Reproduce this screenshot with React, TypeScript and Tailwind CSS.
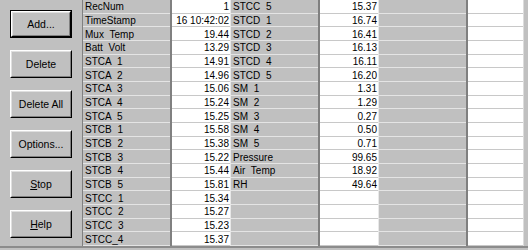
import type { ReactNode } from 'react'

type Cell = [string, string]

const ROWS = 18

const GROUPS: Cell[][] = [
  [
    ['RecNum', '1'],
    ['TimeStamp', '16 10:42:02'],
    ['Mux Temp', '19.44'],
    ['Batt Volt', '13.29'],
    ['STCA 1', '14.91'],
    ['STCA 2', '14.96'],
    ['STCA 3', '15.06'],
    ['STCA 4', '15.24'],
    ['STCA 5', '15.25'],
    ['STCB 1', '15.58'],
    ['STCB 2', '15.38'],
    ['STCB 3', '15.22'],
    ['STCB 4', '15.44'],
    ['STCB 5', '15.81'],
    ['STCC 1', '15.34'],
    ['STCC 2', '15.27'],
    ['STCC 3', '15.23'],
    ['STCC_4', '15.37'],
  ],
  [
    ['STCC 5', '15.37'],
    ['STCD 1', '16.74'],
    ['STCD 2', '16.41'],
    ['STCD 3', '16.13'],
    ['STCD 4', '16.11'],
    ['STCD 5', '16.20'],
    ['SM 1', '1.31'],
    ['SM 2', '1.29'],
    ['SM 3', '0.27'],
    ['SM 4', '0.50'],
    ['SM 5', '0.71'],
    ['Pressure', '99.65'],
    ['Air Temp', '18.92'],
    ['RH', '49.64'],
  ],
  [],
]

function pad(cells: Cell[]): Cell[] {
  const out = [...cells]
  while (out.length < ROWS) out.push(['', ''])
  return out
}

function WinButton({ children, isDefault }: { children: ReactNode; isDefault?: boolean }) {
  return (
    <div className={`flex h-[28px] w-[62px] ${isDefault ? 'border border-black' : ''}`}>
      <div className="flex flex-1 border border-t-white border-l-white border-r-black border-b-black">
        <div className="flex flex-1 items-center justify-center border border-t-[#dfdfdf] border-l-[#dfdfdf] border-r-[#808080] border-b-[#808080] bg-[#c0c0c0] text-[10.5px] leading-none text-black">
          {children}
        </div>
      </div>
    </div>
  )
}

function Group({ cells, first }: { cells: Cell[]; first?: boolean }) {
  const rows = pad(cells)
  return (
    <div className={`flex h-full w-[148px] shrink-0 border-l ${first ? 'border-l-[#808080]' : 'border-l-[#e8e8e8]'}`}>
      <div className="grid w-[87px] shrink-0 grid-rows-[repeat(18,minmax(0,1fr))] bg-[#c0c0c0]">
        {rows.map(([label], i) => (
          <div
            key={i}
            className="flex items-center overflow-hidden whitespace-pre border-b border-b-[#e4e4e4] pl-[2px] pt-[2px] leading-none [word-spacing:3px]"
          >
            {label}
          </div>
        ))}
      </div>
      <div className="w-[2px] shrink-0 bg-[#808080]" />
      <div className="grid w-[58px] shrink-0 grid-rows-[repeat(18,minmax(0,1fr))] bg-white">
        {rows.map(([, value], i) => (
          <div
            key={i}
            className="flex items-center justify-end overflow-hidden whitespace-pre border-b border-b-[#c8c8c8] pr-[1px] pt-[2px] leading-none"
          >
            {value}
          </div>
        ))}
      </div>
    </div>
  )
}

export default function App() {
  return (
    <div className="flex h-[250px] w-[528px] flex-col overflow-hidden bg-[#c0c0c0] font-['Liberation_Sans',Arial,sans-serif] text-[10px] text-black">
      <div className="flex h-[246px] shrink-0">
        <div className="flex w-[82px] shrink-0 flex-col gap-[12px] pl-[10px] pt-[10px]">
          <WinButton isDefault>Add...</WinButton>
          <WinButton>Delete</WinButton>
          <WinButton>Delete All</WinButton>
          <WinButton>Options...</WinButton>
          <WinButton>
            <span>
              <span className="underline">S</span>top
            </span>
          </WinButton>
          <WinButton>
            <span>
              <span className="underline">H</span>elp
            </span>
          </WinButton>
        </div>
        <div className="flex w-[441px] shrink-0 overflow-hidden">
          {GROUPS.map((cells, i) => (
            <Group key={i} cells={cells} first={i === 0} />
          ))}
        </div>
        <div className="flex-1 border-l border-l-[#dcdcdc]" />
      </div>
      <div className="h-[2px] shrink-0 bg-[#8c8c8c]" />
    </div>
  )
}
